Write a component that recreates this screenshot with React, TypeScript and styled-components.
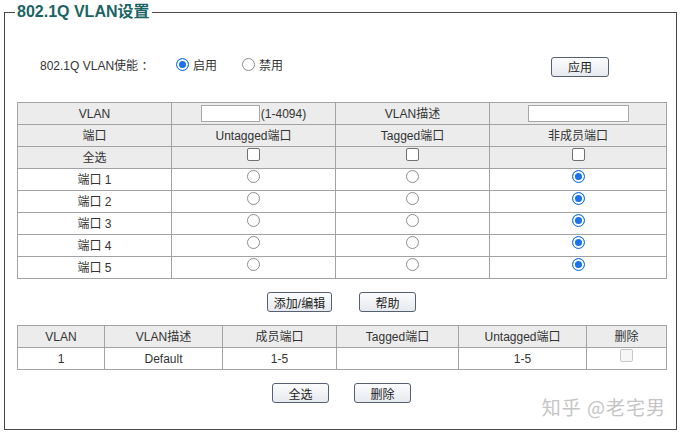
import styled, { createGlobalStyle } from 'styled-components'

const GlobalStyle = createGlobalStyle`
  html, body {
    margin: 0;
    padding: 0;
    background: #fff;
  }
  body {
    font-family: "Liberation Sans", "Noto Sans CJK SC", sans-serif;
    font-size: 12px;
    color: #333;
  }
`

const Frame = styled.fieldset`
  position: relative;
  box-sizing: border-box;
  width: 672px;
  margin: 2px 0 0 4px;
  padding: 0 9px 26px 12px;
  border: 1px solid #4a4a4a;
`

const Title = styled.legend`
  margin-left: -2px;
  padding: 0 2px;
  font-size: 16px;
  font-weight: bold;
  line-height: 20px;
  color: #1b6565;
`

const EnableRow = styled.div`
  display: flex;
  align-items: center;
  height: 22px;
  margin-top: 31px;
`

const EnableLabel = styled.span`
  width: 159px;
  padding-left: 23px;
  box-sizing: border-box;
  color: #333;
`

const Choice = styled.label`
  display: flex;
  align-items: center;
  gap: 4px;
  margin-right: 25px;
  color: #333;
`

const Radio = styled.input.attrs({ type: 'radio' })<{ $cell?: boolean }>`
  appearance: none;
  display: ${(p) => (p.$cell ? 'block' : 'inline-block')};
  box-sizing: border-box;
  width: 13px;
  height: 13px;
  margin: ${(p) => (p.$cell ? '-6px auto 0' : '0')};
  border: 1px solid #8c8c8c;
  border-radius: 50%;
  background: #fff;

  &:checked {
    border: 1.5px solid #1a73e8;
    background: #1a73e8;
    box-shadow: inset 0 0 0 2px #fff;
  }
`

const Check = styled.input.attrs({ type: 'checkbox' })`
  appearance: none;
  display: block;
  box-sizing: border-box;
  width: 13px;
  height: 13px;
  margin: -6px auto 0;
  border: 1px solid #707070;
  border-radius: 2px;
  background: #fff;

  &:disabled {
    border-color: #c8c8c8;
    background: #f6f6f6;
  }
`

const Button = styled.button<{ $w?: number }>`
  box-sizing: border-box;
  width: ${(p) => p.$w ?? 57}px;
  height: 20px;
  padding: 0;
  border: 1px solid #556070;
  border-radius: 3px;
  background: linear-gradient(#fbfcfd, #e6e9ee);
  font-family: "Liberation Sans", "Noto Sans CJK SC", sans-serif;
  font-size: 12px;
  color: #222;
`

const ApplyButton = styled(Button)`
  margin-left: auto;
  margin-right: 58px;
  margin-top: 5px;
`

const Table = styled.table<{ $mt: number }>`
  width: 649px;
  margin-top: ${(p) => p.$mt}px;
  border-collapse: collapse;
  table-layout: fixed;
`

const Row = styled.tr<{ $head?: boolean }>`
  background: ${(p) => (p.$head ? '#ececec' : '#fff')};
`

const Cell = styled.td`
  height: 21px;
  padding: 0;
  border: 1px solid #a3a3a3;
  text-align: center;
  vertical-align: middle;
  color: #333;
  line-height: 14px;
`

const TextBox = styled.input.attrs({ type: 'text' })<{ $w: number }>`
  box-sizing: border-box;
  width: ${(p) => p.$w}px;
  height: 17px;
  margin: 0;
  padding: 0 2px;
  border: 1px solid #a8a8a8;
  background: #fff;
  vertical-align: middle;
`

const Hint = styled.span`
  margin-left: 1px;
  vertical-align: middle;
`

const ButtonRow = styled.div<{ $gap: number }>`
  display: flex;
  justify-content: center;
  gap: ${(p) => p.$gap}px;
  width: 649px;
  margin-top: 13px;
`

const Watermark = styled.div`
  position: absolute;
  right: 10px;
  bottom: 9px;
  font-family: "Noto Sans CJK SC", sans-serif;
  font-size: 19px;
  letter-spacing: 1px;
  color: #c4c4c4;
`

const ports = [1, 2, 3, 4, 5]

export default function App() {
  return (
    <>
      <GlobalStyle />
      <Frame>
        <Title>802.1Q VLAN设置</Title>
        <EnableRow>
          <EnableLabel>802.1Q VLAN使能 ：</EnableLabel>
          <Choice>
            <Radio name="enable" defaultChecked />
            启用
          </Choice>
          <Choice>
            <Radio name="enable" />
            禁用
          </Choice>
          <ApplyButton $w={58}>应用</ApplyButton>
        </EnableRow>

        <Table $mt={27}>
          <colgroup>
            <col style={{ width: 154 }} />
            <col style={{ width: 164 }} />
            <col style={{ width: 154 }} />
            <col style={{ width: 177 }} />
          </colgroup>
          <tbody>
            <Row $head>
              <Cell>VLAN</Cell>
              <Cell>
                <TextBox $w={59} />
                <Hint>(1-4094)</Hint>
              </Cell>
              <Cell>VLAN描述</Cell>
              <Cell>
                <TextBox $w={101} />
              </Cell>
            </Row>
            <Row $head>
              <Cell>端口</Cell>
              <Cell>Untagged端口</Cell>
              <Cell>Tagged端口</Cell>
              <Cell>非成员端口</Cell>
            </Row>
            <Row $head>
              <Cell>全选</Cell>
              <Cell>
                <Check />
              </Cell>
              <Cell>
                <Check />
              </Cell>
              <Cell>
                <Check />
              </Cell>
            </Row>
            {ports.map((n) => (
              <Row key={n}>
                <Cell>端口 {n}</Cell>
                <Cell>
                  <Radio $cell name={`port${n}`} />
                </Cell>
                <Cell>
                  <Radio $cell name={`port${n}`} />
                </Cell>
                <Cell>
                  <Radio $cell name={`port${n}`} defaultChecked />
                </Cell>
              </Row>
            ))}
          </tbody>
        </Table>

        <ButtonRow $gap={27}>
          <Button $w={65}>添加/编辑</Button>
          <Button>帮助</Button>
        </ButtonRow>

        <Table $mt={13}>
          <colgroup>
            <col style={{ width: 87 }} />
            <col style={{ width: 118 }} />
            <col style={{ width: 114 }} />
            <col style={{ width: 122 }} />
            <col style={{ width: 128 }} />
            <col style={{ width: 80 }} />
          </colgroup>
          <tbody>
            <Row $head>
              <Cell>VLAN</Cell>
              <Cell>VLAN描述</Cell>
              <Cell>成员端口</Cell>
              <Cell>Tagged端口</Cell>
              <Cell>Untagged端口</Cell>
              <Cell>删除</Cell>
            </Row>
            <Row>
              <Cell>1</Cell>
              <Cell>Default</Cell>
              <Cell>1-5</Cell>
              <Cell></Cell>
              <Cell>1-5</Cell>
              <Cell>
                <Check disabled />
              </Cell>
            </Row>
          </tbody>
        </Table>

        <ButtonRow $gap={25}>
          <Button>全选</Button>
          <Button>删除</Button>
        </ButtonRow>

        <Watermark>知乎 @老宅男</Watermark>
      </Frame>
    </>
  )
}
